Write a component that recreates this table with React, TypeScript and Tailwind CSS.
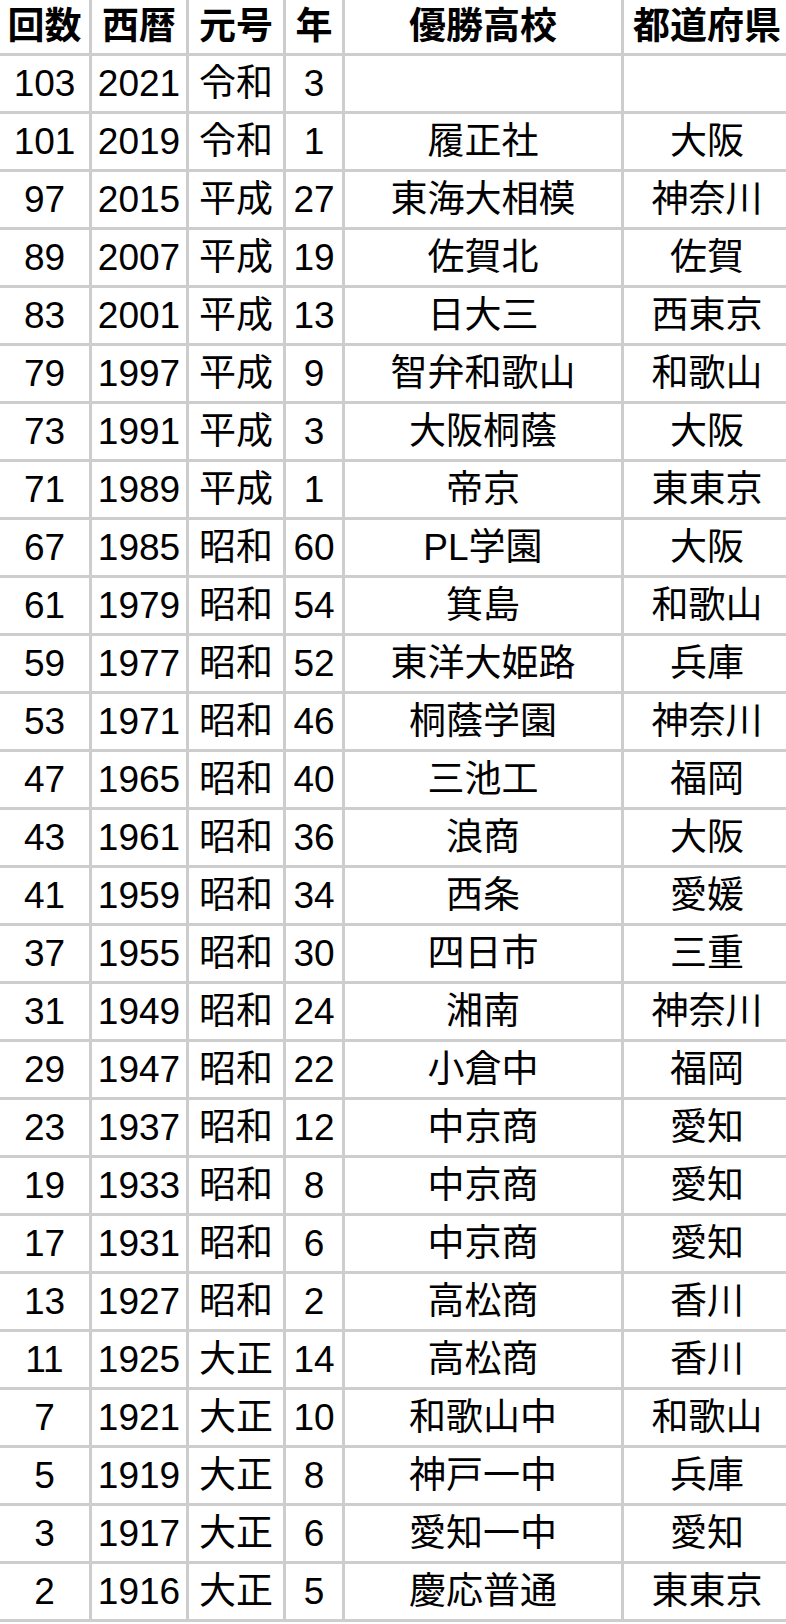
import React from 'react';

type Row = [string, string, string, string, string, string];

const header: Row = ['回数', '西暦', '元号', '年', '優勝高校', '都道府県'];

const rows: Row[] = [
  ['103', '2021', '令和', '3', '', ''],
  ['101', '2019', '令和', '1', '履正社', '大阪'],
  ['97', '2015', '平成', '27', '東海大相模', '神奈川'],
  ['89', '2007', '平成', '19', '佐賀北', '佐賀'],
  ['83', '2001', '平成', '13', '日大三', '西東京'],
  ['79', '1997', '平成', '9', '智弁和歌山', '和歌山'],
  ['73', '1991', '平成', '3', '大阪桐蔭', '大阪'],
  ['71', '1989', '平成', '1', '帝京', '東東京'],
  ['67', '1985', '昭和', '60', 'PL学園', '大阪'],
  ['61', '1979', '昭和', '54', '箕島', '和歌山'],
  ['59', '1977', '昭和', '52', '東洋大姫路', '兵庫'],
  ['53', '1971', '昭和', '46', '桐蔭学園', '神奈川'],
  ['47', '1965', '昭和', '40', '三池工', '福岡'],
  ['43', '1961', '昭和', '36', '浪商', '大阪'],
  ['41', '1959', '昭和', '34', '西条', '愛媛'],
  ['37', '1955', '昭和', '30', '四日市', '三重'],
  ['31', '1949', '昭和', '24', '湘南', '神奈川'],
  ['29', '1947', '昭和', '22', '小倉中', '福岡'],
  ['23', '1937', '昭和', '12', '中京商', '愛知'],
  ['19', '1933', '昭和', '8', '中京商', '愛知'],
  ['17', '1931', '昭和', '6', '中京商', '愛知'],
  ['13', '1927', '昭和', '2', '高松商', '香川'],
  ['11', '1925', '大正', '14', '高松商', '香川'],
  ['7', '1921', '大正', '10', '和歌山中', '和歌山'],
  ['5', '1919', '大正', '8', '神戸一中', '兵庫'],
  ['3', '1917', '大正', '6', '愛知一中', '愛知'],
  ['2', '1916', '大正', '5', '慶応普通', '東東京'],
];

// widths include the 3px right border
const colClasses = [
  'w-[92px] border-r-[3px]',
  'w-[97px] border-r-[3px]',
  'w-[97px] border-r-[3px]',
  'w-[59px] border-r-[3px]',
  'w-[279px] border-r-[3px]',
  'w-[166px]',
];

function TableRow({ cells, head }: { cells: Row; head?: boolean }) {
  return (
    <div
      className={`flex shrink-0 border-b-[3px] border-[#cdcdcd] ${
        head ? 'h-[56px] font-bold' : 'h-[58px]'
      }`}
    >
      {cells.map((c, i) => (
        <div
          key={i}
          className={`${colClasses[i]} shrink-0 border-[#cdcdcd] flex items-center justify-center whitespace-nowrap`}
        >
          {c}
        </div>
      ))}
    </div>
  );
}

export default function App() {
  return (
    <div
      className="w-[786px] h-[1624px] overflow-hidden bg-white text-black text-[37px] leading-none"
      style={{ fontFamily: '"Liberation Sans", "Noto Sans CJK JP", sans-serif' }}
    >
      <div className="w-[790px] flex flex-col">
        <TableRow cells={header} head />
        {rows.map((r) => (
          <TableRow key={r[0]} cells={r} />
        ))}
      </div>
    </div>
  );
}
